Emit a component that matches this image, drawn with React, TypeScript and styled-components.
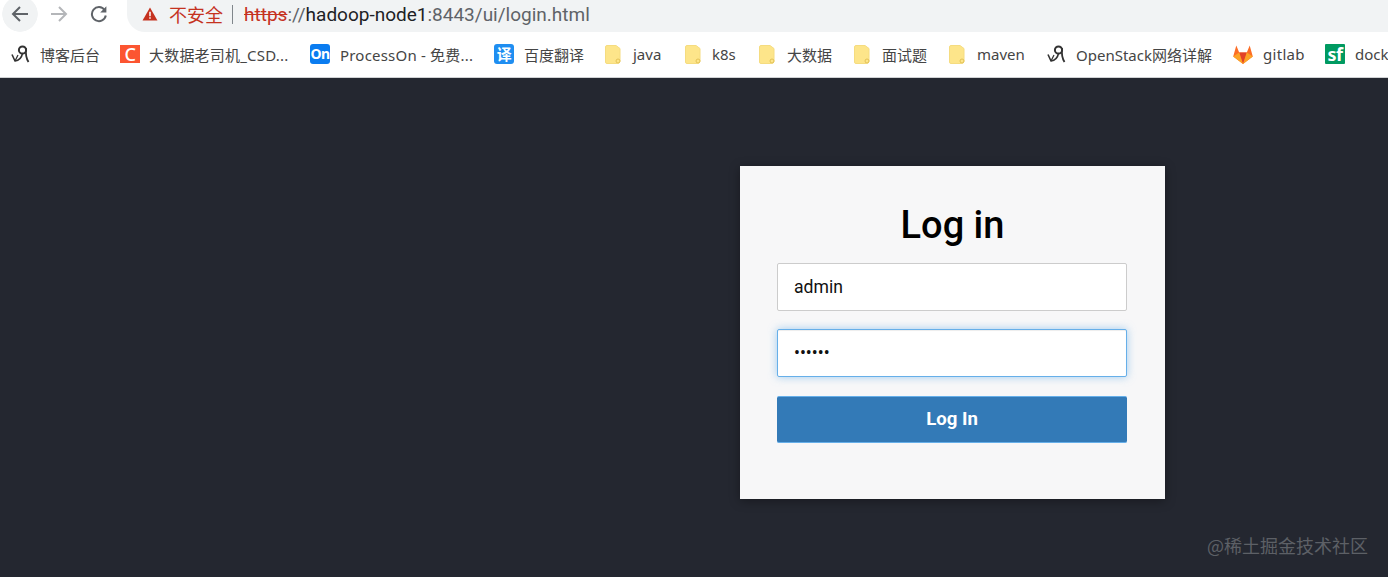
import React from "react";
import styled, { createGlobalStyle } from "styled-components";

const Global = createGlobalStyle`
  html, body { margin: 0; padding: 0; background: #242730; }
  body { width: 1388px; height: 577px; overflow: hidden; font-family: "Noto Sans", "Noto Sans CJK SC", sans-serif; }
  * { box-sizing: border-box; }
`;

const Shell = styled.div`
  position: relative;
  width: 1388px;
  height: 577px;
  display: flex;
  flex-direction: column;
  overflow: hidden;
`;

const Toolbar = styled.div`
  height: 32px;
  background: #fff;
  display: flex;
  align-items: stretch;
  padding-left: 2px;
`;

const RoundButton = styled.div<{ $active?: boolean; $w: number }>`
  width: ${(p) => p.$w}px;
  height: 32px;
  flex: none;
  display: flex;
  align-items: center;
  justify-content: center;
  padding-bottom: 4px;
  background: ${(p) =>
    p.$active
      ? "radial-gradient(circle 18px at 18px 14px, #f1f3f4 97%, transparent 100%)"
      : "transparent"};
`;

const AddressPill = styled.div`
  margin-left: 9px;
  flex: 1;
  height: 32px;
  background: #f1f3f4;
  border-radius: 0 0 0 18px;
  display: flex;
  align-items: center;
  padding: 0 0 4px 15px;
  font-family: "Roboto", "Noto Sans CJK SC", sans-serif;
  font-size: 19px;
  color: #5f6368;
  white-space: nowrap;
`;

const Insecure = styled.span`
  color: #c5321f;
  margin-left: 11px;
  font-family: "Noto Sans CJK SC", sans-serif;
  font-size: 18px;
`;

const Divider = styled.span`
  width: 1px;
  height: 19px;
  background: #80868b;
  margin: 0 11px 0 9px;
`;

const Struck = styled.span`
  color: #c5321f;
  text-decoration: line-through;
`;

const Host = styled.span`
  color: #202124;
`;

const BookmarkBar = styled.div`
  height: 46px;
  background: #fff;
  border-bottom: 1px solid #d0d2d4;
  display: flex;
  align-items: center;
  overflow: hidden;
  padding-bottom: 1px;
`;

const Bookmark = styled.div<{ $left: number; $gap: number; $w: number; $track?: number }>`
  flex: none;
  width: ${(p) => p.$w}px;
  margin-left: ${(p) => p.$left}px;
  display: flex;
  align-items: center;
  gap: ${(p) => p.$gap}px;
  font-size: 15px;
  letter-spacing: ${(p) => p.$track ?? 0}px;
  color: #454545;
  white-space: nowrap;
`;

const IconTile = styled.span<{ $bg: string; $radius?: number; $size?: number; $weight?: number; $h?: number }>`
  flex: none;
  width: 20px;
  height: ${(p) => p.$h ?? 20}px;
  background: ${(p) => p.$bg};
  border-radius: ${(p) => p.$radius ?? 0}px;
  color: #fff;
  font-family: "Noto Sans", "Noto Sans CJK SC", sans-serif;
  font-weight: ${(p) => p.$weight ?? 700};
  font-size: ${(p) => p.$size ?? 14}px;
  line-height: ${(p) => p.$h ?? 20}px;
  letter-spacing: -0.5px;
  text-align: center;
`;

const Main = styled.main`
  flex: 1;
  background: #242730;
  padding: 88px 0 0 740px;
`;

const Card = styled.form`
  width: 425px;
  height: 333px;
  background: #f7f7f8;
  box-shadow: 0 2px 10px rgba(0, 0, 0, 0.35);
  padding: 37px 37px 0;
  display: flex;
  flex-direction: column;
  font-family: "Roboto", sans-serif;
`;

const Title = styled.h1`
  margin: 0 0 16px;
  height: 44px;
  font-size: 38px;
  line-height: 44px;
  font-weight: 500;
  color: #000;
  text-align: center;
`;

const Field = styled.input<{ $focused?: boolean }>`
  width: 350px;
  height: 48px;
  margin-bottom: 18px;
  padding: 0 16px ${(p) => (p.$focused ? 0 : 1)}px;
  border: 1px solid ${(p) => (p.$focused ? "#66afe9" : "#cccccc")};
  border-radius: 2px;
  background: #fff;
  color: #111;
  font-family: "Roboto", sans-serif;
  font-size: 17.6px;
  outline: none;
  box-shadow: ${(p) =>
    p.$focused ? "0 0 8px rgba(102, 175, 233, 0.6), inset 0 1px 1px rgba(0,0,0,.075)" : "none"};
`;

const Submit = styled.button`
  width: 350px;
  height: 47px;
  margin-top: 1px;
  border: 1px solid #66afe9;
  border-width: 1px 0 1px 0;
  border-radius: 2px;
  background: #337ab7;
  color: #fff;
  font-family: "Roboto", sans-serif;
  font-size: 18.6px;
  font-weight: 700;
  padding: 0 0 2px;
`;

const Watermark = styled.div`
  position: absolute;
  right: 20px;
  bottom: 21px;
  font-family: "Noto Sans CJK SC", sans-serif;
  font-size: 18px;
  line-height: 22px;
  color: #5d6066;
`;

const BackIcon = () => (
  <svg width="18" height="18" viewBox="0 0 18 18" fill="none" stroke="#5f6368" strokeWidth="2">
    <path d="M17 9H2M9 2 2 9l7 7" />
  </svg>
);
const ForwardIcon = () => (
  <svg width="18" height="18" viewBox="0 0 18 18" fill="none" stroke="#b4b6b9" strokeWidth="2">
    <path d="M1 9h15M9 2l7 7-7 7" />
  </svg>
);
const ReloadIcon = () => (
  <svg width="18" height="18" viewBox="0 0 18 18" fill="none">
    <path d="M14.6 5A7 7 0 1 0 15.8 10.5" stroke="#5f6368" strokeWidth="2" />
    <path d="M16.4 1.2v6.2h-6.2z" fill="#5f6368" />
  </svg>
);
const WarnIcon = () => (
  <svg width="16" height="14" viewBox="0 0 17 15" style={{ flex: "none" }}>
    <path d="M8.5 0.5 16.5 14.5H0.5z" fill="#c5321f" />
    <path d="M7.7 5h1.6v5H7.7zM7.7 11h1.6v1.6H7.7z" fill="#fff" />
  </svg>
);
const SwirlIcon = () => (
  <svg width="19" height="18" viewBox="0 0 19 18" fill="none" stroke="#333" style={{ flex: "none" }}>
    <path d="M1 9.5 4 16c4-.5 6.500-3 7.500-7.500" strokeWidth="1.6" />
    <path d="M4 16 7 10" strokeWidth="1.2" />
    <circle cx="11.500" cy="5" r="3.600" strokeWidth="2" />
    <path d="M15 3c-.5 5 0 10 2.500 14" strokeWidth="1.8" />
  </svg>
);
const FolderIcon = () => (
  <svg width="16" height="19" viewBox="0 0 16 19" style={{ flex: "none" }}>
    <path d="M2 .5h9l4 3v12.500a2.500 2.500 0 0 1-2.500 2.500H2A1.500 1.500 0 0 1 .5 17V2A1.500 1.500 0 0 1 2 .5z" fill="#fde58a" stroke="#f5dc80" />
    <circle cx="13" cy="16" r="2" fill="none" stroke="#e3c256" />
  </svg>
);
const GitlabIcon = () => (
  <svg width="20" height="19" viewBox="0 0 20 19" style={{ flex: "none" }}>
    <path d="M10 19 .2 11.500 3.300.5 6.200 7.400h7.600L16.700.5l3.100 11z" fill="#fc6d26" />
    <path d="M10 19 6.200 7.400h7.600z" fill="#e24329" />
    <path d="M10 19 .2 11.500 6.200 7.400zM10 19l9.800-7.500-6-4.100z" fill="#fca326" />
  </svg>
);

export default function App() {
  return (
    <Shell>
      <Global />
      <Toolbar>
        <RoundButton $w={36} $active><BackIcon /></RoundButton>
        <RoundButton $w={42}><ForwardIcon /></RoundButton>
        <RoundButton $w={38}><ReloadIcon /></RoundButton>
        <AddressPill>
          <WarnIcon />
          <Insecure>不安全</Insecure>
          <Divider />
          <Struck>https</Struck>
          <span>://</span>
          <Host>hadoop-node1</Host>
          <span>:8443/ui/login.html</span>
        </AddressPill>
      </Toolbar>
      <BookmarkBar>
        <Bookmark $left={11} $gap={10} $w={89}><SwirlIcon />博客后台</Bookmark>
        <Bookmark $left={20} $gap={9} $w={170} $track={0.2}><IconTile $bg="#fc5531" $size={18} $weight={500} $h={18}>C</IconTile>大数据老司机_CSD...</Bookmark>
        <Bookmark $left={20} $gap={10} $w={164} $track={0.2}><IconTile $bg="#0a7cf0" $radius={3}>On</IconTile>ProcessOn - 免费...</Bookmark>
        <Bookmark $left={20} $gap={10} $w={91}><IconTile $bg="#1f8ef1" $radius={3} $size={15}>译</IconTile>百度翻译</Bookmark>
        <Bookmark $left={20} $gap={12} $w={60}><FolderIcon />java</Bookmark>
        <Bookmark $left={20} $gap={11} $w={51}><FolderIcon />k8s</Bookmark>
        <Bookmark $left={23} $gap={12} $w={73}><FolderIcon />大数据</Bookmark>
        <Bookmark $left={22} $gap={12} $w={73}><FolderIcon />面试题</Bookmark>
        <Bookmark $left={22} $gap={12} $w={76}><FolderIcon />maven</Bookmark>
        <Bookmark $left={22} $gap={10} $w={166}><SwirlIcon />OpenStack网络详解</Bookmark>
        <Bookmark $left={20} $gap={10} $w={72} $track={0.3}><GitlabIcon />gitlab</Bookmark>
        <Bookmark $left={20} $gap={10} $w={80}><IconTile $bg="#009a61" $radius={1} $size={18}>sf</IconTile>docker</Bookmark>
      </BookmarkBar>
      <Main>
        <Card>
          <Title>Log in</Title>
          <Field type="text" value="admin" readOnly />
          <Field type="password" value="123456" readOnly $focused />
          <Submit type="button">Log In</Submit>
        </Card>
      </Main>
      <Watermark>@稀土掘金技术社区</Watermark>
    </Shell>
  );
}
